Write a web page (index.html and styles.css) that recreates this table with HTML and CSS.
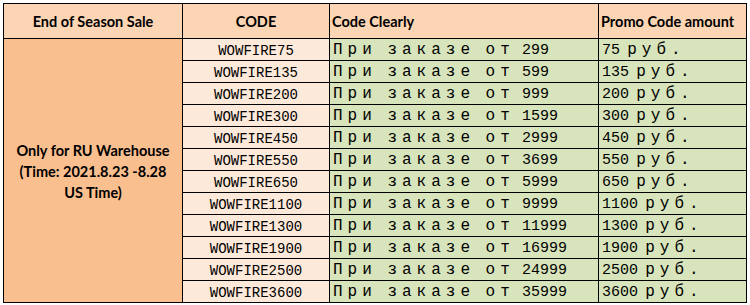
FILE: index.html
```html
<!DOCTYPE html>
<html>
<head>
<meta charset="utf-8">
<link rel="stylesheet" href="styles.css">
</head>
<body>
<table class="promo">
  <colgroup>
    <col class="c1"><col class="c2"><col class="c3"><col class="c4">
  </colgroup>
  <thead>
    <tr class="head">
      <th class="center">End of Season Sale</th>
      <th class="center">CODE</th>
      <th class="left">Code Clearly</th>
      <th class="left">Promo Code amount</th>
    </tr>
  </thead>
  <tbody>
    <tr>
      <td class="event" rowspan="12">Only for RU Warehouse<br>(Time: 2021.8.23 -8.28<br>US Time)</td>
      <td class="code">WOWFIRE75</td>
      <td class="cond"><span class="ru">При заказе от</span> <span class="num">299</span></td>
      <td class="amt"><span class="num">75</span> <span class="ru">руб.</span></td>
    </tr>
    <tr><td class="code">WOWFIRE135</td><td class="cond"><span class="ru">При заказе от</span> <span class="num">599</span></td><td class="amt"><span class="num">135</span> <span class="ru">руб.</span></td></tr>
    <tr><td class="code">WOWFIRE200</td><td class="cond"><span class="ru">При заказе от</span> <span class="num">999</span></td><td class="amt"><span class="num">200</span> <span class="ru">руб.</span></td></tr>
    <tr><td class="code">WOWFIRE300</td><td class="cond"><span class="ru">При заказе от</span> <span class="num">1599</span></td><td class="amt"><span class="num">300</span> <span class="ru">руб.</span></td></tr>
    <tr><td class="code">WOWFIRE450</td><td class="cond"><span class="ru">При заказе от</span> <span class="num">2999</span></td><td class="amt"><span class="num">450</span> <span class="ru">руб.</span></td></tr>
    <tr><td class="code">WOWFIRE550</td><td class="cond"><span class="ru">При заказе от</span> <span class="num">3699</span></td><td class="amt"><span class="num">550</span> <span class="ru">руб.</span></td></tr>
    <tr><td class="code">WOWFIRE650</td><td class="cond"><span class="ru">При заказе от</span> <span class="num">5999</span></td><td class="amt"><span class="num">650</span> <span class="ru">руб.</span></td></tr>
    <tr><td class="code">WOWFIRE1100</td><td class="cond"><span class="ru">При заказе от</span> <span class="num">9999</span></td><td class="amt"><span class="num">1100</span> <span class="ru">руб.</span></td></tr>
    <tr><td class="code">WOWFIRE1300</td><td class="cond"><span class="ru">При заказе от</span> <span class="num">11999</span></td><td class="amt"><span class="num">1300</span> <span class="ru">руб.</span></td></tr>
    <tr><td class="code">WOWFIRE1900</td><td class="cond"><span class="ru">При заказе от</span> <span class="num">16999</span></td><td class="amt"><span class="num">1900</span> <span class="ru">руб.</span></td></tr>
    <tr><td class="code">WOWFIRE2500</td><td class="cond"><span class="ru">При заказе от</span> <span class="num">24999</span></td><td class="amt"><span class="num">2500</span> <span class="ru">руб.</span></td></tr>
    <tr><td class="code">WOWFIRE3600</td><td class="cond"><span class="ru">При заказе от</span> <span class="num">35999</span></td><td class="amt"><span class="num">3600</span> <span class="ru">руб.</span></td></tr>
  </tbody>
</table>
</body>
</html>
```
FILE: styles.css
```css
html, body {
  margin: 0;
  padding: 0;
  background: #ffffff;
}
body {
  padding: 3px 0 0 3px;
}
.promo {
  border-collapse: collapse;
  table-layout: fixed;
  width: 743px;
}
.c1 { width: 179px; }
.c2 { width: 147px; }
.c3 { width: 269px; }
.c4 { width: 148px; }
.promo th, .promo td {
  border: 1px solid #000;
  padding: 0;
  white-space: nowrap;
  overflow: hidden;
}
.head th {
  height: 34px;
  background: #fcd5b4;
  font-family: Lato, "Open Sans", sans-serif;
  font-weight: 700;
  font-size: 14.5px;
  color: #000;
  vertical-align: middle;
}
.head th.center { text-align: center; }
.head th.left { text-align: left; padding-left: 2px; }
.promo tbody td {
  height: 21px;
  line-height: 18px;
  vertical-align: bottom;
}
.promo tbody td.event {
  background: #fabf8f;
  font-family: Lato, "Open Sans", sans-serif;
  font-weight: 700;
  font-size: 14.5px;
  line-height: 21px;
  text-align: center;
  vertical-align: middle;
  padding-top: 2px;
}
.code {
  background: #fde9d9;
  text-align: center;
  font-family: "Liberation Mono", monospace;
  font-size: 14px;
}
.cond, .amt {
  background: #d8e4bc;
  font-family: "Liberation Mono", monospace;
  font-size: 12px;
}
.promo tbody td.cond, .promo tbody td.amt {
  padding-left: 3px;
}
.ru {
  font-size: 16px;
  line-height: 18px;
  letter-spacing: 5px;
  word-spacing: -4px;
}
.num {
  font-size: 15px;
  line-height: 18px;
}
```
